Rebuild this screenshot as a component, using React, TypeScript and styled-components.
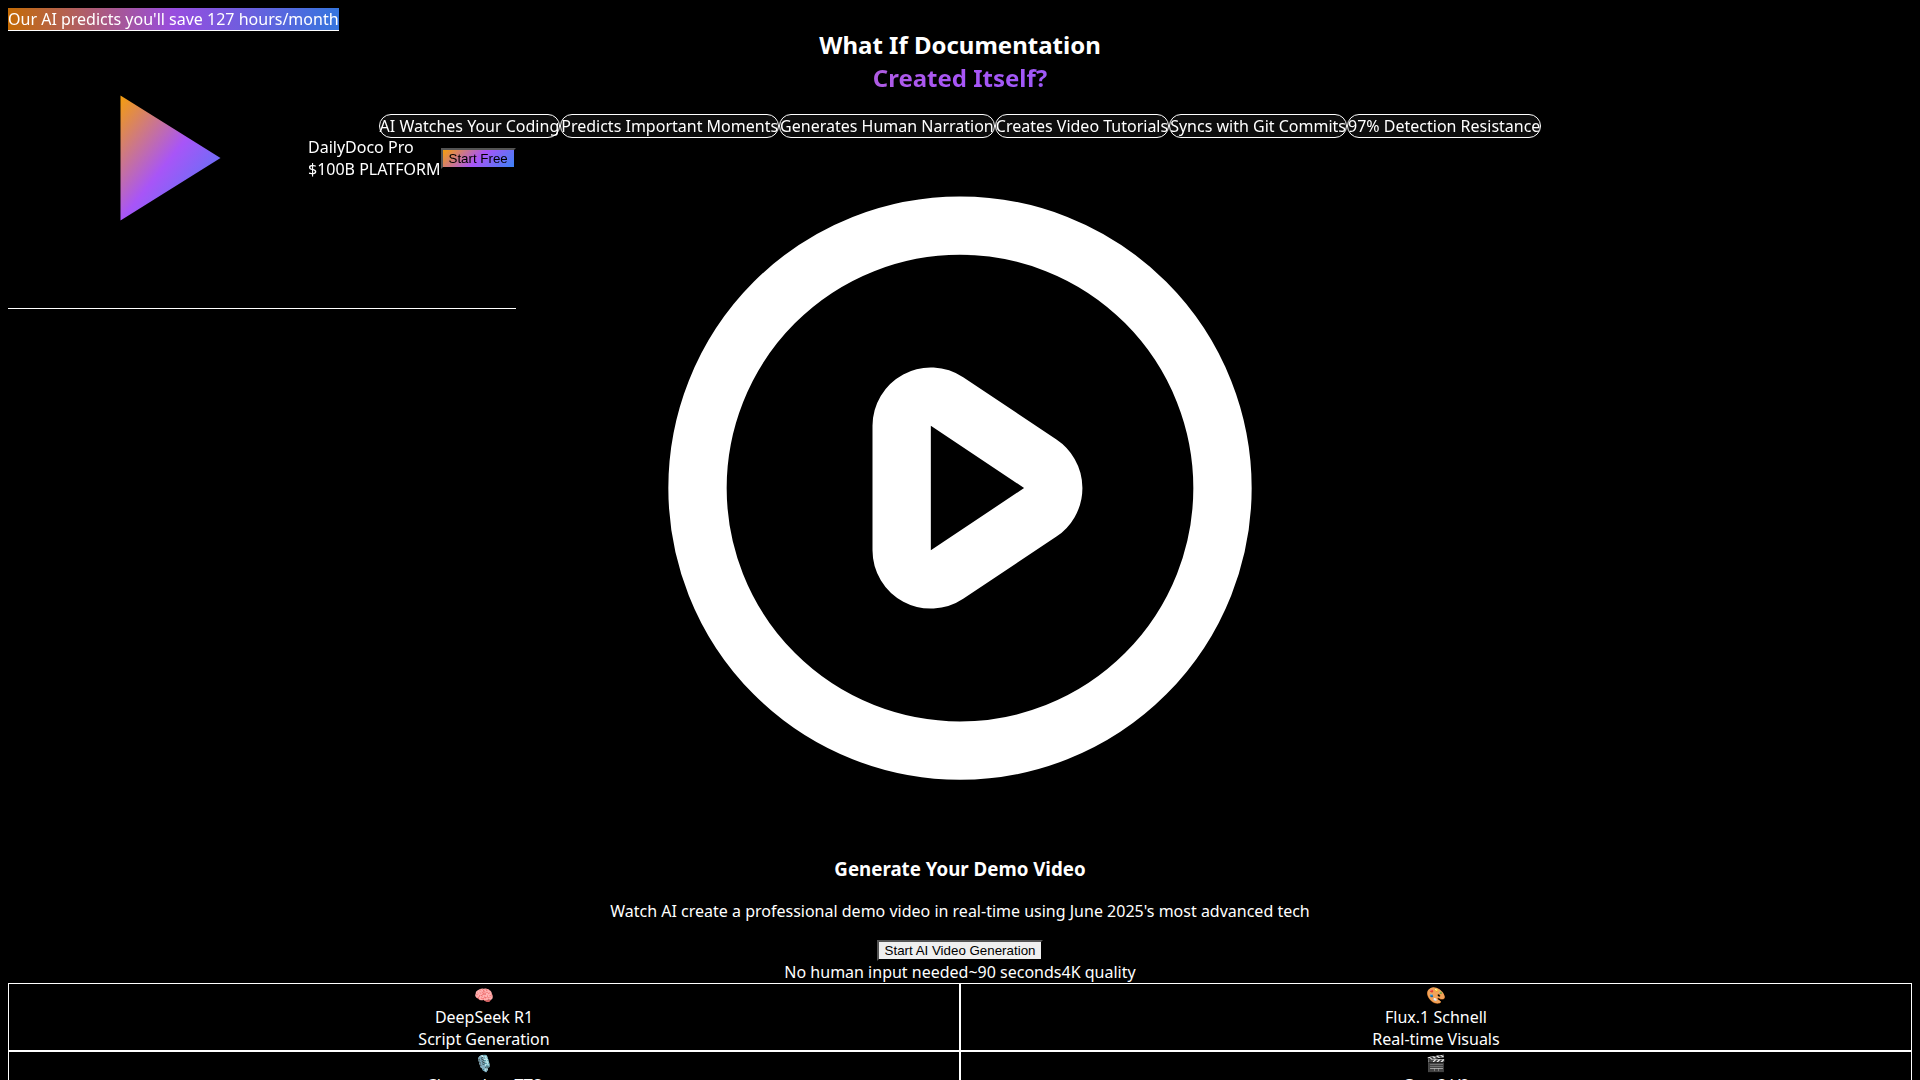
import React from "react";
import styled, { createGlobalStyle } from "styled-components";

const GlobalStyle = createGlobalStyle`
  body {
    margin: 0;
    background: #000;
    color: #fff;
    font-family: "Noto Sans", sans-serif;
    font-size: 16px;
    line-height: 22px;
  }
`;

const brandGradient = "linear-gradient(135deg, #f59e0b 0%, #a855f7 50%, #3b82f6 100%)";

const Page = styled.div`
  padding: 8px;
`;

const Banner = styled.div`
  position: absolute;
  top: 8px;
  left: 8px;
  z-index: 60;
  border-bottom: 1px solid #fff;
  background: linear-gradient(
    90deg,
    rgba(217, 119, 6, 0.9),
    rgba(168, 85, 247, 0.9),
    rgba(59, 130, 246, 0.9)
  );
`;

const Header = styled.header`
  position: absolute;
  top: 8px;
  left: 8px;
  z-index: 50;
  display: flex;
  align-items: center;
  border-bottom: 1px solid #fff;
  will-change: transform;
`;

const Brand = styled.div`
  display: flex;
  align-items: center;
`;

const Logo = styled.svg`
  display: block;
  width: 300px;
  height: 300px;
`;

const Button = styled.button<{ $brand?: boolean }>`
  border: 2px outset #000;
  padding: 1px 6px;
  color: #000;
  background: ${(p) => (p.$brand ? brandGradient : "#efefef")};
  font-family: "Liberation Sans", Arial, sans-serif;
`;

const Main = styled.main`
  display: flex;
  flex-direction: column;
  text-align: center;
`;

const Title = styled.h2`
  margin: 20px 0;
  font-size: 24px;
  line-height: 33px;
`;

const GradientText = styled.span`
  display: block;
  background: ${brandGradient};
  background-clip: text;
  -webkit-background-clip: text;
  color: transparent;
`;

const Chips = styled.ul`
  display: flex;
  flex-wrap: wrap;
  justify-content: center;
  margin: 0;
  padding: 0;
  list-style: none;
`;

const Chip = styled.li`
  border: 1px solid #fff;
  border-radius: 9999px;
  background: rgba(255, 255, 255, 0.05);
  backdrop-filter: blur(10px);
`;

const Demo = styled.section`
  display: flex;
  flex-direction: column;
  align-items: center;
`;

const PlayIcon = styled.svg`
  display: block;
  width: 700px;
  max-width: 100%;
  aspect-ratio: 1;
`;

const DemoTitle = styled.h3`
  margin: 18px 0;
  line-height: 26px;
`;

const DemoText = styled.p`
  margin: 0 0 18px;
`;

const Facts = styled.div`
  display: flex;
  justify-content: center;
`;

const TechGrid = styled.div`
  display: grid;
  grid-template-columns: repeat(2, 1fr);
`;

const TechCard = styled.div`
  border: 1px solid #fff;
`;

const features = [
  "AI Watches Your Coding",
  "Predicts Important Moments",
  "Generates Human Narration",
  "Creates Video Tutorials",
  "Syncs with Git Commits",
  "97% Detection Resistance",
];

const facts = ["No human input needed", "~90 seconds", "4K quality"];

const stack = [
  { icon: "🧠", name: "DeepSeek R1", role: "Script Generation" },
  { icon: "🎨", name: "Flux.1 Schnell", role: "Real-time Visuals" },
  { icon: "🎙️", name: "Chatterbox TTS", role: "Voice Synthesis" },
  { icon: "🎬", name: "Gen 3 V2", role: "Video Assembly" },
];

export default function App() {
  return (
    <Page>
      <GlobalStyle />
      <Banner>Our AI predicts you'll save 127 hours/month</Banner>
      <Header>
        <Brand>
          <Logo viewBox="0 0 24 24" aria-hidden="true">
            <defs>
              <linearGradient id="logo" x1="0%" y1="0%" x2="100%" y2="100%">
                <stop offset="0%" stopColor="#f59e0b" />
                <stop offset="50%" stopColor="#a855f7" />
                <stop offset="100%" stopColor="#3b82f6" />
              </linearGradient>
            </defs>
            <path d="M9 7l8 5-8 5V7z" fill="url(#logo)" />
          </Logo>
          <div>
            <div>DailyDoco Pro</div>
            <div>$100B PLATFORM</div>
          </div>
        </Brand>
        <Button $brand type="button">Start Free</Button>
      </Header>
      <Main>
        <Title>
          What If Documentation
          <GradientText>Created Itself?</GradientText>
        </Title>
        <Chips>
          {features.map((f) => (
            <Chip key={f}>{f}</Chip>
          ))}
        </Chips>
        <Demo>
          <PlayIcon
            viewBox="0 0 24 24"
            fill="none"
            stroke="currentColor"
            strokeWidth="2"
            strokeLinecap="round"
            strokeLinejoin="round"
            aria-hidden="true"
          >
            <path d="M14.752 11.168l-3.197-2.132A1 1 0 0010 9.87v4.263a1 1 0 001.555.832l3.197-2.132a1 1 0 000-1.664z" />
            <path d="M21 12a9 9 0 11-18 0 9 9 0 0118 0z" />
          </PlayIcon>
          <DemoTitle>Generate Your Demo Video</DemoTitle>
          <DemoText>
            Watch AI create a professional demo video in real-time using June 2025's most advanced tech
          </DemoText>
          <Button type="button">Start AI Video Generation</Button>
        </Demo>
        <Facts>
          {facts.map((f) => (
            <span key={f}>{f}</span>
          ))}
        </Facts>
        <TechGrid>
          {stack.map((t) => (
            <TechCard key={t.name}>
              <div>{t.icon}</div>
              <div>{t.name}</div>
              <div>{t.role}</div>
            </TechCard>
          ))}
        </TechGrid>
      </Main>
    </Page>
  );
}
